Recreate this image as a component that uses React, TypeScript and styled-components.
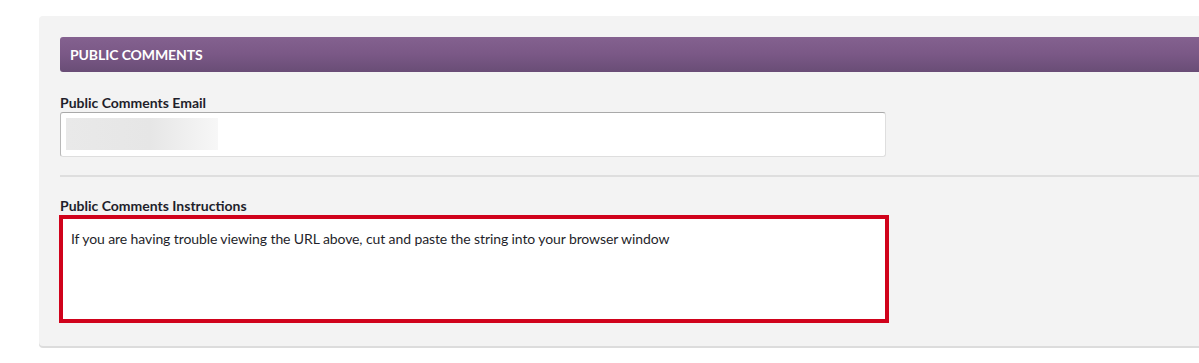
import styled, { createGlobalStyle } from 'styled-components';

const GlobalStyle = createGlobalStyle`
  html, body {
    margin: 0;
    padding: 0;
    background: #ffffff;
    overflow: hidden;
  }
  body {
    font-family: Lato, "Open Sans", "Liberation Sans", sans-serif;
    color: #222;
  }
  * {
    box-sizing: border-box;
  }
`;

const Page = styled.div`
  width: 1199px;
  height: 363px;
  padding: 16px 0 0 39px;
  overflow: hidden;
`;

const Panel = styled.section`
  width: 1200px;
  padding: 21px 0 23px 21px;
  background: #f3f3f3;
  border-radius: 4px 0 0 4px;
  box-shadow: 0 2px 0 #dcdcdc;
`;

const SectionHeader = styled.h2`
  margin: 0;
  height: 35px;
  padding-left: 10px;
  display: flex;
  align-items: center;
  background: linear-gradient(to bottom, #84618f 0%, #7a5886 50%, #694d76 100%);
  border-radius: 3px 0 0 3px;
  color: #fff;
  font-size: 14px;
  font-weight: 700;
  letter-spacing: -0.1px;
`;

const Field = styled.div`
  display: flex;
  flex-direction: column;
  padding-top: ${(p: { $top: number }) => p.$top}px;
`;

const Label = styled.label`
  font-size: 14px;
  font-weight: 700;
  line-height: 17px;
  color: #1f1f2b;
  margin-bottom: 1px;
`;

const EmailBox = styled.div`
  width: 826px;
  height: 45px;
  padding: 5px;
  background: #fff;
  border: 1px solid #dedede;
  border-top-color: #a9a9a9;
  border-left-color: #b8b8b8;
  border-radius: 3px;
`;

const Redacted = styled.div`
  width: 152px;
  height: 32px;
  background: linear-gradient(to right, #e9e9e9 0%, #e6e6e6 55%, #f7f7f7 100%);
`;

const Divider = styled.hr`
  margin: 18px 0 0;
  border: 0;
  border-top: 2px solid #dedede;
`;

const Instructions = styled.div`
  width: 830px;
  height: 108px;
  margin-left: -1px;
  padding: 10px 8px;
  background: #fff;
  border: 4px solid #d0021b;
  font-size: 14px;
  line-height: 20px;
  letter-spacing: -0.1px;
  color: #1f1f2b;
`;

export default function App() {
  return (
    <>
      <GlobalStyle />
      <Page>
        <Panel>
          <SectionHeader>PUBLIC COMMENTS</SectionHeader>
          <Field $top={22}>
            <Label>Public Comments Email</Label>
            <EmailBox>
              <Redacted />
            </EmailBox>
          </Field>
          <Divider />
          <Field $top={20}>
            <Label>Public Comments Instructions</Label>
            <Instructions>
              If you are having trouble viewing the URL above, cut and paste the string into your browser window
            </Instructions>
          </Field>
        </Panel>
      </Page>
    </>
  );
}
